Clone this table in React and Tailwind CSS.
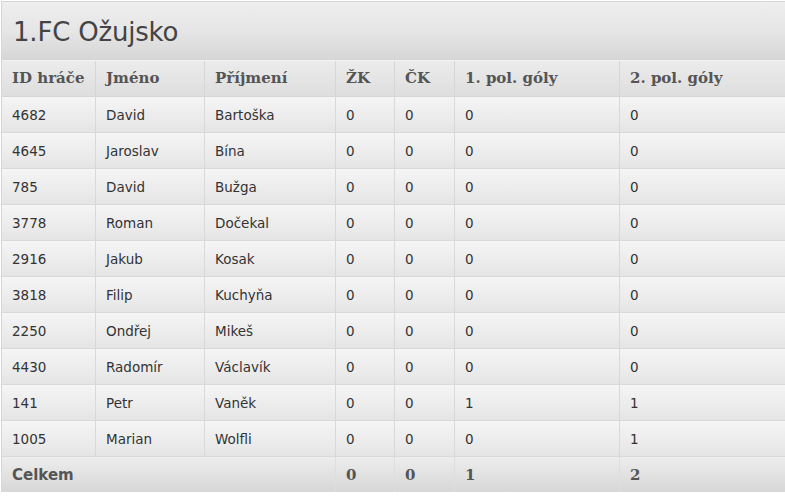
const players = [
  { id: "4682", first: "David", last: "Bartoška", zk: 0, ck: 0, g1: 0, g2: 0 },
  { id: "4645", first: "Jaroslav", last: "Bína", zk: 0, ck: 0, g1: 0, g2: 0 },
  { id: "785", first: "David", last: "Bužga", zk: 0, ck: 0, g1: 0, g2: 0 },
  { id: "3778", first: "Roman", last: "Dočekal", zk: 0, ck: 0, g1: 0, g2: 0 },
  { id: "2916", first: "Jakub", last: "Kosak", zk: 0, ck: 0, g1: 0, g2: 0 },
  { id: "3818", first: "Filip", last: "Kuchyňa", zk: 0, ck: 0, g1: 0, g2: 0 },
  { id: "2250", first: "Ondřej", last: "Mikeš", zk: 0, ck: 0, g1: 0, g2: 0 },
  { id: "4430", first: "Radomír", last: "Václavík", zk: 0, ck: 0, g1: 0, g2: 0 },
  { id: "141", first: "Petr", last: "Vaněk", zk: 0, ck: 0, g1: 1, g2: 1 },
  { id: "1005", first: "Marian", last: "Wolfli", zk: 0, ck: 0, g1: 0, g2: 1 },
];

const headers = ["ID hráče", "Jméno", "Příjmení", "ŽK", "ČK", "1. pol. góly", "2. pol. góly"];

const grid = "grid grid-cols-[94px_109px_131px_59px_60px_165px_165px]";

export default function App() {
  const totals = players.reduce(
    (acc, p) => ({
      zk: acc.zk + p.zk,
      ck: acc.ck + p.ck,
      g1: acc.g1 + p.g1,
      g2: acc.g2 + p.g2,
    }),
    { zk: 0, ck: 0, g1: 0, g2: 0 }
  );

  return (
    <div className="w-[785px] h-[496px] bg-white font-['DejaVu_Sans',sans-serif]">
      <div className="ml-px mt-px border-t border-l border-[#d6d6d6]">
        {/* Title */}
        <div className="h-[59px] flex items-center px-[11px] pt-[2px] bg-linear-to-b from-[#eeeeee] via-[#e6e6e6] to-[#d6d6d6] border-b border-[#f2f2f2]">
          <h1 className="text-[26px] text-[#444] tracking-[-0.2px]">1.FC Ožujsko</h1>
        </div>

        {/* Header row */}
        <div className={grid}>
          {headers.map((h) => (
            <div
              key={h}
              className="h-9 flex items-center px-[10px] border-r border-b border-[#d6d6d6] last:border-r-0 bg-linear-to-b from-[#ececec] to-[#dedede] font-['DejaVu_Serif',serif] font-bold text-[15px] text-[#555]"
            >
              {h}
            </div>
          ))}
        </div>

        {/* Rows */}
        {players.map((p) => (
          <div key={p.id} className={grid}>
            {[p.id, p.first, p.last, p.zk, p.ck, p.g1, p.g2].map((v, i) => (
              <div
                key={i}
                className="h-9 flex items-center px-[10px] pt-[2px] border-r border-b border-[#d9d9d9] last:border-r-0 bg-linear-to-b from-[#f5f5f5] to-[#e5e5e5] text-[13.5px] text-[#333]"
              >
                {v}
              </div>
            ))}
          </div>
        ))}

        {/* Footer */}
        <div className={grid}>
          <div className="col-span-3 h-[35px] flex items-center px-[10px] pt-px border-r border-[#dedede] bg-linear-to-b from-[#ededed] to-[#d7d7d7] font-bold text-[15px] text-[#555]">
            Celkem
          </div>
          {[totals.zk, totals.ck, totals.g1, totals.g2].map((v, i) => (
            <div
              key={i}
              className="h-[35px] flex items-center px-[10px] pt-px border-r border-[#dedede] last:border-r-0 bg-linear-to-b from-[#ededed] to-[#d7d7d7] font-['DejaVu_Serif',serif] font-bold text-[15px] text-[#555]"
            >
              {v}
            </div>
          ))}
        </div>
      </div>
    </div>
  );
}
